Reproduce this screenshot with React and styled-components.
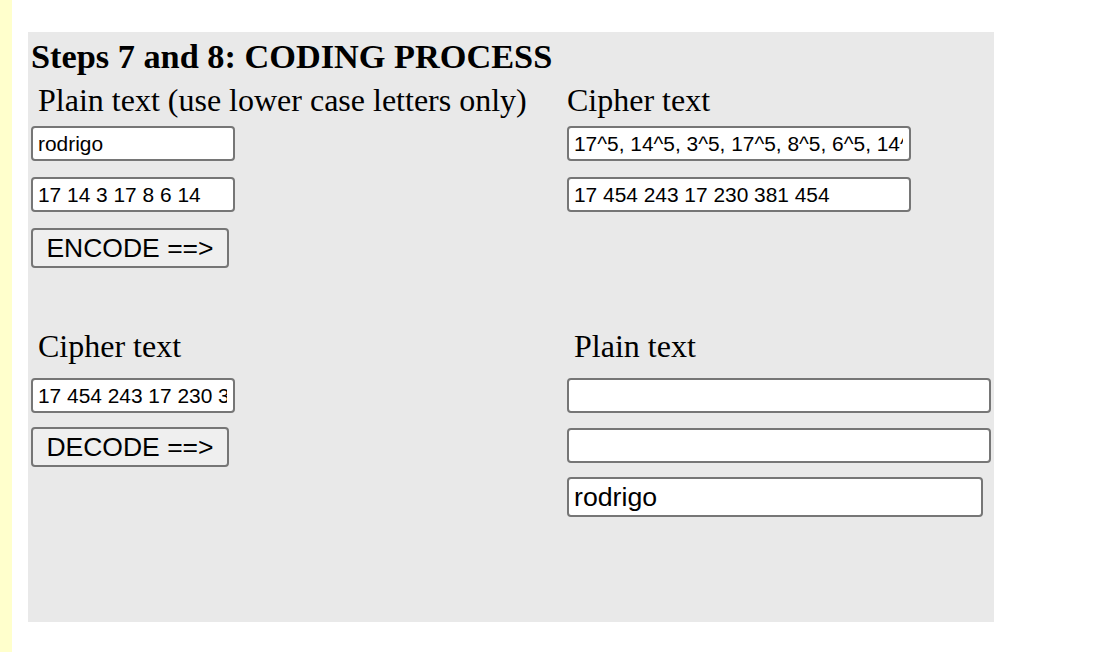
import React from "react";
import styled, { createGlobalStyle } from "styled-components";

const GlobalStyle = createGlobalStyle`
  html, body {
    margin: 0;
    padding: 0;
    background: #ffffff;
  }
  body {
    font-family: "Liberation Serif", "Times New Roman", serif;
    color: #000000;
  }
`;

const Page = styled.div`
  display: flex;
  min-height: 652px;
`;

const SideStrip = styled.div`
  width: 12px;
  flex: 0 0 12px;
  background: #ffffcc;
`;

const Content = styled.div`
  padding: 32px 0 0 16px;
`;

const Panel = styled.div`
  width: 966px;
  height: 590px;
  box-sizing: border-box;
  background: #e9e9e9;
  padding: 0 3px;
`;

const Title = styled.h2`
  margin: 0;
  font-family: "Liberation Serif", "Times New Roman", serif;
  font-weight: bold;
  font-size: 34.3px;
  line-height: 48px;
`;

const Section = styled.div`
  display: grid;
  grid-template-columns: 536px 1fr;
  margin-top: ${(p) => p.$top || 0}px;
`;

const Column = styled.div`
  display: flex;
  flex-direction: column;
  align-items: flex-start;
`;

const Label = styled.div`
  font-size: 32px;
  line-height: 36px;
  padding-left: ${(p) => (p.$indent ? 7 : 0)}px;
  margin-bottom: ${(p) => p.$gap || 8}px;
  white-space: nowrap;
`;

const Field = styled.input`
  box-sizing: border-box;
  width: ${(p) => p.$w || 204}px;
  height: ${(p) => (p.$big ? 40 : 35)}px;
  margin: 0 0 ${(p) => p.$mb ?? 16}px 0;
  padding: 0 6px 0 5px;
  border: 2px solid #767676;
  border-radius: 4px;
  background: #ffffff;
  font-family: "Liberation Sans", Arial, sans-serif;
  font-size: ${(p) => (p.$big ? 26.7 : 20.9)}px;
  color: #000000;
  outline: none;
`;

const Button = styled.button`
  box-sizing: border-box;
  width: 198px;
  height: 40px;
  margin: 0;
  padding: 0;
  border: 2px solid #767676;
  border-radius: 4px;
  background: #efefef;
  font-family: "Liberation Sans", Arial, sans-serif;
  font-size: 26.5px;
  color: #000000;
  cursor: pointer;
`;

export default function App() {
  return (
    <>
      <GlobalStyle />
      <Page>
        <SideStrip />
        <Content>
          <Panel>
            <Title>Steps 7 and 8: CODING PROCESS</Title>
            <Section $top={2}>
              <Column>
                <Label $indent>Plain text (use lower case letters only)</Label>
                <Field readOnly value="rodrigo" />
                <Field readOnly value="17 14 3 17 8 6 14" />
                <Button>ENCODE ==&gt;</Button>
              </Column>
              <Column>
                <Label>Cipher text</Label>
                <Field readOnly $w={344} value="17^5, 14^5, 3^5, 17^5, 8^5, 6^5, 14^5" />
                <Field readOnly $w={344} value="17 454 243 17 230 381 454" />
              </Column>
            </Section>
            <Section $top={60}>
              <Column>
                <Label $indent $gap={14}>Cipher text</Label>
                <Field readOnly value="17 454 243 17 230 381 454" $mb={14} />
                <Button>DECODE ==&gt;</Button>
              </Column>
              <Column>
                <Label $indent $gap={14}>Plain text</Label>
                <Field readOnly $w={424} value="" $mb={15} />
                <Field readOnly $w={424} value="" $mb={14} />
                <Field readOnly $w={416} $big value="rodrigo" $mb={0} />
              </Column>
            </Section>
          </Panel>
        </Content>
      </Page>
    </>
  );
}
